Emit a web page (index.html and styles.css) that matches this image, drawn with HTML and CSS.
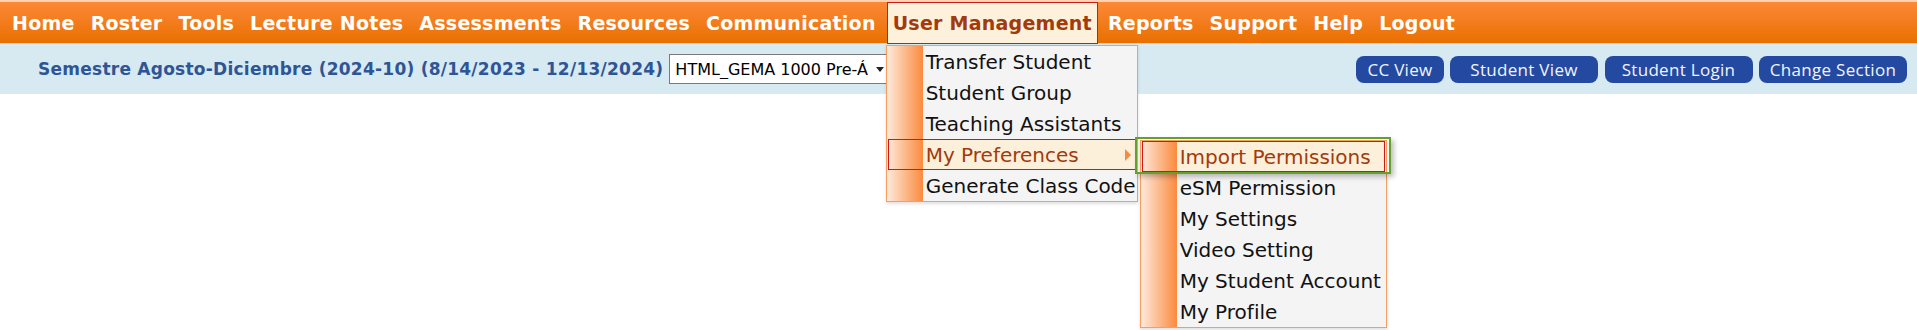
FILE: index.html
```html
<!DOCTYPE html>
<html lang="es">
<head>
    <meta charset="UTF-8">
    <meta name="viewport" content="width=device-width, initial-scale=1.0">
    <title>User Management</title>
    <link rel="stylesheet" href="styles.css">
</head>
<body>
    <div class="topnav">
        <ul class="nav">
            <li><a href="#">Home</a></li>
            <li><a href="#">Roster</a></li>
            <li><a href="#">Tools</a></li>
            <li><a href="#">Lecture Notes</a></li>
            <li><a href="#">Assessments</a></li>
            <li><a href="#">Resources</a></li>
            <li><a href="#">Communication</a></li>
            <li class="active">
                <a href="#">User Management</a>
                <ul class="menu">
                    <li>Transfer Student</li>
                    <li>Student Group</li>
                    <li>Teaching Assistants</li>
                    <li class="hover">
                        <span>My Preferences</span>
                        <span class="caret"></span>
                        <!-- Submenu preferencias -->
                        <ul class="menu submenu">
                            <li class="hover focus">Import Permissions</li>
                            <li>eSM Permission</li>
                            <li>My Settings</li>
                            <li>Video Setting</li>
                            <li>My Student Account</li>
                            <li>My Profile</li>
                        </ul>
                    </li>
                    <li>Generate Class Code</li>
                </ul>
            </li>
            <li><a href="#">Reports</a></li>
            <li><a href="#">Support</a></li>
            <li><a href="#">Help</a></li>
            <li><a href="#">Logout</a></li>
        </ul>
    </div>

    <div class="subbar">
        <div class="course">
            <span class="term">Semestre Agosto-Diciembre (2024-10) (8/14/2023 - 12/13/2024)</span>
            <span class="select-wrap">
                <select id="section">
                    <option>HTML_GEMA 1000 Pre-Álgebra</option>
                </select>
            </span>
        </div>
        <div class="actions">
            <button class="btn btn-small">CC View</button>
            <button class="btn">Student View</button>
            <button class="btn">Student Login</button>
            <button class="btn">Change Section</button>
        </div>
    </div>
</body>
</html>
```

FILE: styles.css
```css
html, body {
    min-height: 100%;
}
html {
    height: 100%;
}
body {
    margin: 0;
    padding: 0;
    font-family: "DejaVu Sans", Verdana, sans-serif;
    background-color: #ffffff;
}
/* Barra naranja */
.topnav {
    position: relative;
    z-index: 5;
    background: linear-gradient(#fd8838, #e87000);
    border-top: 2px solid #fcd4b4;
    border-bottom: 1px solid #f6c8a0;
}
.nav {
    display: flex;
    height: 41px;
    margin: 0;
    padding: 0 0 0 4px;
    list-style: none;
}
.nav > li {
    position: relative;
}
.nav > li > a {
    display: block;
    padding: 0 8px;
    line-height: 42px;
    color: #ffffff;
    font-size: 19px;
    font-weight: bold;
    letter-spacing: 0.25px;
    text-decoration: none;
}
.nav > li.active {
    margin: 0 2px 0 3px;
}
.nav > li.active > a {
    padding: 0 5px;
    line-height: 40px;
    background: #fdf1dc;
    color: #a23a0d;
    border: 1px solid #cc1a1a;
}
/* Menu desplegable */
.menu {
    position: absolute;
    top: calc(100% + 2px);
    left: -1px;
    width: 248px;
    margin: 0;
    padding: 0 1px;
    list-style: none;
    background: linear-gradient(to right, #feeadd, #fb8a3e 36px, #f4f4f4 36px);
    border: 1px solid #f79d5e;
    box-shadow: 0 2px 3px rgba(0, 0, 0, 0.12);
}
.menu li {
    position: relative;
    display: flex;
    align-items: center;
    height: 29px;
    padding: 0 4px 0 37px;
    border: 1px solid transparent;
    font-size: 20px;
    color: #111111;
    white-space: nowrap;
}
.menu li.hover {
    background: linear-gradient(to right, transparent 34px, #fdf0da 34px);
    border-color: #cc1a1a;
    color: #a23a0d;
}
.menu li.hover > ul {
    color: #111111;
}
.caret {
    margin-left: auto;
    border-left: 6px solid #f58a40;
    border-top: 6px solid transparent;
    border-bottom: 6px solid transparent;
}
.submenu {
    top: 0;
    left: 251px;
    width: 243px;
}
.submenu li.focus::before {
    content: "";
    position: absolute;
    left: -8px;
    right: -7px;
    top: -5px;
    bottom: -3px;
    border: 2px solid #64a02c;
    box-shadow: 3px 3px 5px rgba(0, 0, 0, 0.25);
    pointer-events: none;
}
/* Barra azul */
.subbar {
    display: flex;
    align-items: center;
    justify-content: space-between;
    height: 50px;
    padding: 0 10px 0 38px;
    background: #d7e9f1;
}
.course {
    display: flex;
    align-items: baseline;
    gap: 6px;
}
.term {
    font-size: 17px;
    font-weight: bold;
    letter-spacing: 0.25px;
    color: #2e5596;
}
.select-wrap {
    position: relative;
}
.select-wrap::after {
    content: "";
    position: absolute;
    right: 5px;
    top: 13px;
    border-left: 4px solid transparent;
    border-right: 4px solid transparent;
    border-top: 5px solid #222222;
}
.select-wrap select {
    appearance: none;
    width: 220px;
    height: 30px;
    padding: 0 20px 0 5px;
    border: 1px solid #7a7a7a;
    border-radius: 0;
    background: #ffffff;
    color: #000000;
    font-family: "DejaVu Sans", sans-serif;
    font-size: 16px;
}
.actions {
    display: flex;
    gap: 6.5px;
}
.btn {
    box-sizing: border-box;
    min-width: 148px;
    height: 27px;
    padding: 0 10px;
    border: none;
    border-radius: 8px;
    background: #2349a1;
    color: #f2f5fb;
    font-family: "Open Sans", sans-serif;
    font-size: 17px;
    letter-spacing: 0.3px;
    line-height: 27px;
    cursor: pointer;
}
.btn-small {
    min-width: 0;
    padding: 0 11px;
}
```
